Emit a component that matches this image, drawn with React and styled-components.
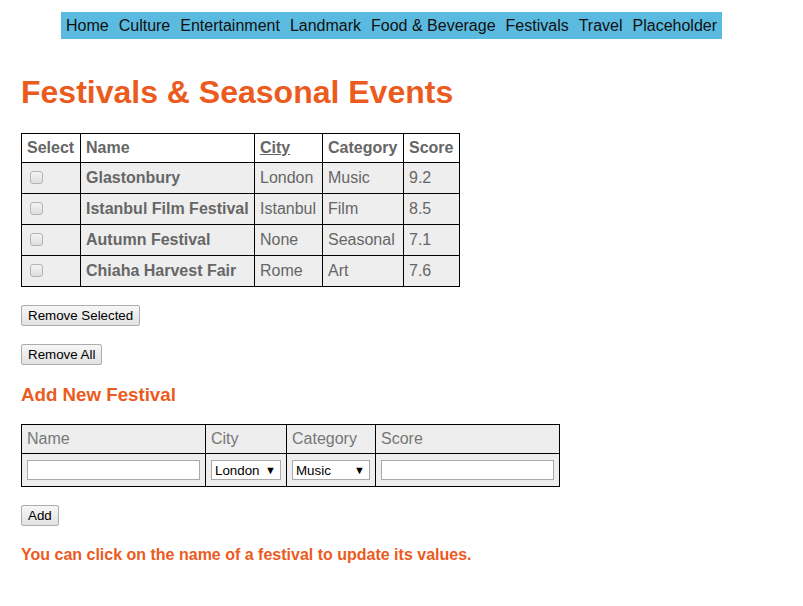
import React, { useState } from 'react';
import styled, { createGlobalStyle } from 'styled-components';

const GlobalStyle = createGlobalStyle`
  body {
    margin: 8px;
    background: #fff;
    font-family: "Liberation Sans", Arial, sans-serif;
  }
`;

const orange = '#ec5b1e';

const Nav = styled.nav`
  display: flex;
  width: fit-content;
  margin: 4px 0 0 53px;
  background-color: #5bbae0;
`;

const NavItem = styled.a`
  padding: 0 5px;
  font-size: 16px;
  line-height: 27px;
  color: #111;
  text-decoration: none;
  cursor: pointer;
`;

const Main = styled.main`
  padding: 0 13px;
`;

const Title = styled.h1`
  margin: 35px 0 22px;
  font-size: 32px;
  line-height: 37px;
  font-weight: bold;
  color: ${orange};
`;

const Table = styled.table`
  border-collapse: collapse;
  font-size: 16px;
  color: #666;
`;

const HeadCell = styled.th`
  border: 1px solid #000;
  padding: 5px;
  line-height: 18px;
  width: ${({ $w }) => $w}px;
  text-align: left;
  font-weight: bold;
  background: #fff;
  text-decoration: ${({ $underline }) => ($underline ? 'underline' : 'none')};
`;

const Cell = styled.td`
  border: 1px solid #000;
  padding: 6px 5px;
  line-height: 18px;
  background: #eee;
  font-weight: ${({ $bold }) => ($bold ? 'bold' : 'normal')};
  cursor: ${({ $bold }) => ($bold ? 'pointer' : 'default')};
  white-space: nowrap;
`;

const Check = styled.input.attrs({ type: 'checkbox' })`
  appearance: none;
  display: inline-block;
  vertical-align: middle;
  width: 13px;
  height: 13px;
  margin: -2px 3px 0 3px;
  border: 1px solid #b4b4b4;
  border-radius: 3px;
  background: linear-gradient(#f4f4f4, #dedede);
  box-sizing: border-box;
  &:checked {
    background: #6aa9e8;
  }
`;

const Button = styled.button`
  display: block;
  margin: ${({ $top }) => $top}px 0 0;
  height: 21px;
  padding: 0 6px;
  font-family: "Liberation Sans", Arial, sans-serif;
  font-size: 13.33px;
  color: #000;
  border: 1px solid #adadad;
  border-radius: 2px;
  background: linear-gradient(#f6f6f6, #e2e2e2);
  cursor: pointer;
`;

const SubTitle = styled.h3`
  margin: 19px 0 18px;
  font-size: 18.72px;
  line-height: 22px;
  font-weight: bold;
  color: ${orange};
`;

const FormTable = styled.table`
  border-collapse: collapse;
  font-size: 16px;
  color: #777;
`;

const FormHead = styled.th`
  border: 1px solid #000;
  padding: 5px;
  line-height: 18px;
  text-align: left;
  font-weight: normal;
  background: #eee;
  width: ${({ $w }) => $w}px;
`;

const FormCell = styled.td`
  border: 1px solid #000;
  padding: 6px 5px;
  background: #eee;
`;

const TextInput = styled.input`
  display: block;
  box-sizing: border-box;
  width: 173px;
  height: 20px;
  padding: 1px 2px;
  border: 1px solid #a9a9a9;
  background: #fff;
  font-family: "Liberation Sans", Arial, sans-serif;
  font-size: 13.33px;
`;

const SelectWrap = styled.div`
  position: relative;
  width: ${({ $w }) => $w}px;
`;

const Select = styled.select`
  display: block;
  box-sizing: border-box;
  appearance: none;
  width: 100%;
  height: 20px;
  padding: 0 0 0 3px;
  border: 1px solid #a9a9a9;
  border-radius: 0;
  background: #fff;
  color: #000;
  font-family: "Liberation Sans", Arial, sans-serif;
  font-size: 13.33px;
`;

const Arrow = styled.span`
  position: absolute;
  right: 5px;
  top: 4px;
  font-size: 11px;
  line-height: 12px;
  color: #000;
  pointer-events: none;
`;

const Hint = styled.p`
  margin: 20px 0 0;
  font-size: 16px;
  line-height: 18px;
  font-weight: bold;
  color: ${orange};
`;

const navItems = ['Home', 'Culture', 'Entertainment', 'Landmark', 'Food & Beverage', 'Festivals', 'Travel', 'Placeholder'];

const festivals = [
  { name: 'Glastonbury', city: 'London', category: 'Music', score: '9.2' },
  { name: 'Istanbul Film Festival', city: 'Istanbul', category: 'Film', score: '8.5' },
  { name: 'Autumn Festival', city: 'None', category: 'Seasonal', score: '7.1' },
  { name: 'Chiaha Harvest Fair', city: 'Rome', category: 'Art', score: '7.6' },
];

const App = () => {
  const [rows, setRows] = useState(festivals);

  return (
    <>
      <GlobalStyle />
      <Nav>
        {navItems.map((item) => (
          <NavItem key={item}>{item}</NavItem>
        ))}
      </Nav>
      <Main>
        <Title>Festivals &amp; Seasonal Events</Title>
        <Table>
          <thead>
            <tr>
              <HeadCell $w={48}>Select</HeadCell>
              <HeadCell $w={163}>Name</HeadCell>
              <HeadCell $w={57} $underline>City</HeadCell>
              <HeadCell $w={70}>Category</HeadCell>
              <HeadCell $w={45}>Score</HeadCell>
            </tr>
          </thead>
          <tbody>
            {rows.map((row) => (
              <tr key={row.name}>
                <Cell><Check /></Cell>
                <Cell $bold>{row.name}</Cell>
                <Cell>{row.city}</Cell>
                <Cell>{row.category}</Cell>
                <Cell>{row.score}</Cell>
              </tr>
            ))}
          </tbody>
        </Table>
        <Button $top={18}>Remove Selected</Button>
        <Button $top={18} onClick={() => setRows([])}>Remove All</Button>

        <SubTitle>Add New Festival</SubTitle>
        <FormTable>
          <thead>
            <tr>
              <FormHead $w={173}>Name</FormHead>
              <FormHead $w={70}>City</FormHead>
              <FormHead $w={78}>Category</FormHead>
              <FormHead $w={173}>Score</FormHead>
            </tr>
          </thead>
          <tbody>
            <tr>
              <FormCell><TextInput type="text" /></FormCell>
              <FormCell>
                <SelectWrap $w={70}>
                  <Select defaultValue="London">
                    <option>London</option>
                    <option>Istanbul</option>
                    <option>Rome</option>
                    <option>None</option>
                  </Select>
                  <Arrow>▼</Arrow>
                </SelectWrap>
              </FormCell>
              <FormCell>
                <SelectWrap $w={78}>
                  <Select defaultValue="Music">
                    <option>Music</option>
                    <option>Film</option>
                    <option>Seasonal</option>
                    <option>Art</option>
                  </Select>
                  <Arrow>▼</Arrow>
                </SelectWrap>
              </FormCell>
              <FormCell><TextInput type="text" /></FormCell>
            </tr>
          </tbody>
        </FormTable>
        <Button $top={18}>Add</Button>
        <Hint>You can click on the name of a festival to update its values.</Hint>
      </Main>
    </>
  );
};

export default App;
